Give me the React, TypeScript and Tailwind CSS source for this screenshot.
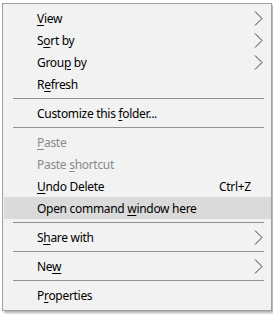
import React from "react";

type Item =
  | { type: "sep" }
  | {
      type: "item";
      pre: string;
      u: string;
      post: string;
      sub?: boolean;
      disabled?: boolean;
      hot?: boolean;
      shortcut?: string;
    };

const items: Item[] = [
  { type: "item", pre: "", u: "V", post: "iew", sub: true },
  { type: "item", pre: "S", u: "o", post: "rt by", sub: true },
  { type: "item", pre: "Grou", u: "p", post: " by", sub: true },
  { type: "item", pre: "R", u: "e", post: "fresh" },
  { type: "sep" },
  { type: "item", pre: "Customize this ", u: "f", post: "older..." },
  { type: "sep" },
  { type: "item", pre: "", u: "P", post: "aste", disabled: true },
  { type: "item", pre: "Paste ", u: "s", post: "hortcut", disabled: true },
  { type: "item", pre: "", u: "U", post: "ndo Delete", shortcut: "Ctrl+Z" },
  { type: "item", pre: "Open command ", u: "w", post: "indow here", hot: true },
  { type: "sep" },
  { type: "item", pre: "S", u: "h", post: "are with", sub: true },
  { type: "sep" },
  { type: "item", pre: "Ne", u: "w", post: "", sub: true },
  { type: "sep" },
  { type: "item", pre: "P", u: "r", post: "operties" },
];

function Chevron() {
  return (
    <svg width="9" height="15" viewBox="0 0 9 15" className="absolute left-[250px] top-[4px]">
      <path d="M1 0.5 L8 7.5 L1 14.5" fill="none" stroke="#3a3a3a" strokeWidth="1" />
    </svg>
  );
}

export default function App() {
  return (
    <div className="w-[273px] h-[321px] bg-white pt-[3px] pl-[2px]" style={{ fontFamily: '"Noto Sans", "Open Sans", sans-serif' }}>
      <div className="w-[270px] h-[308px] bg-[#f2f2f2] border border-[#a0a0a0] pt-[3px] pl-[1px] shadow-[2px_2px_2px_rgba(0,0,0,0.3)]">
        {items.map((it, i) =>
          it.type === "sep" ? (
            <div key={i} className="h-[7px] flex items-center pl-[9px] pr-[7px]">
              <div className="h-px w-full bg-[#919191]" />
            </div>
          ) : (
            <div
              key={i}
              className={`relative h-[22px] w-[267px] flex items-center pl-[33px] pt-[1px] text-[12px] leading-none tracking-[-0.3px] ${
                it.hot ? "bg-[#dadada]" : ""
              } ${it.disabled ? "text-[#8a8a8a]" : "text-black"}`}
            >
              <span className="whitespace-pre">
                {it.pre}
                <span className="underline underline-offset-[2px]">{it.u}</span>
                {it.post}
              </span>
              {it.shortcut && <span className="absolute left-[215px]">{it.shortcut}</span>}
              {it.sub && <Chevron />}
            </div>
          )
        )}
      </div>
    </div>
  );
}
